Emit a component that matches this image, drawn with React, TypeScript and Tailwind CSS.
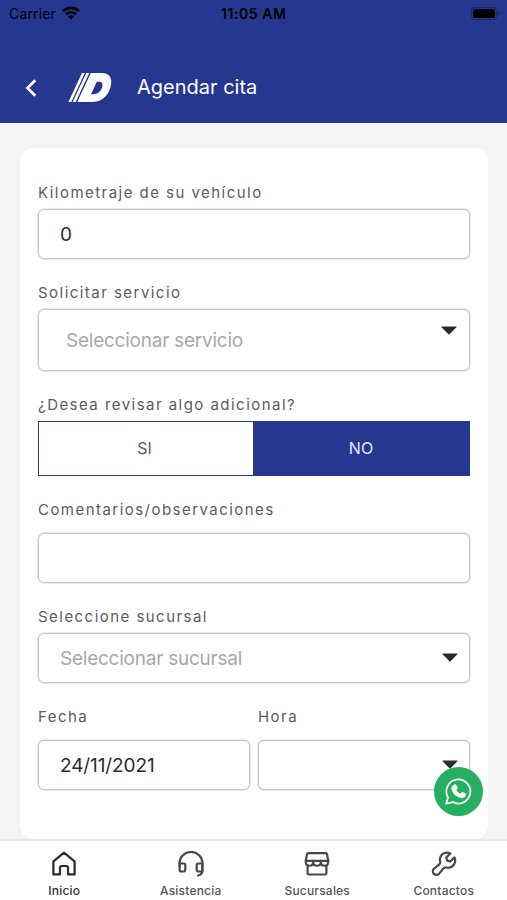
import React from 'react';

const labelClass = "block h-5 text-[15px] leading-5 tracking-[1.46px] text-[#5c5c5c] whitespace-nowrap";
const boxClass = "flex items-center rounded-md border border-[#c6c6c6] shadow-[0_0_0_0.5px_#d4d4d4] bg-white";

function Caret({ className = "" }: { className?: string }) {
  return (
    <svg width="16" height="9" viewBox="0 0 16 9" className={className}>
      <path d="M1 .5h14a.5.5 0 0 1 .4.8L8.6 8.2a.9.9 0 0 1-1.2 0L.6 1.3A.5.5 0 0 1 1 .5Z" fill="#2b2b2b" />
    </svg>
  );
}

function StatusBar() {
  return (
    <div className="relative flex h-7 items-center justify-between pl-[9px] pr-[7px] text-black">
      <div className="flex items-center gap-[6px]">
        <span className="text-[14px] leading-7 tracking-[0.15px]">Carrier</span>
        <svg width="18" height="14" viewBox="0 0 18 14" fill="none" stroke="#000" strokeWidth="2.6" className="-mt-[2px]">
          <path d="M1 5.1a11.6 11.6 0 0 1 16 0" />
          <path d="M4 8.2a7.3 7.3 0 0 1 10 0" />
          <path d="M9 13.6 6 10.6a4.3 4.3 0 0 1 6 0Z" fill="#000" stroke="none" />
        </svg>
      </div>
      <span className="absolute left-[221px] text-[14px] leading-7 font-semibold tracking-[0.55px] whitespace-nowrap">11:05 AM</span>
      <svg width="29" height="13" viewBox="0 0 29 13" className="-mt-[2px]">
        <rect x="0.5" y="0.5" width="25" height="12" rx="3" fill="none" stroke="#000" strokeOpacity="0.25" />
        <rect x="2" y="2" width="22" height="9" rx="1.5" fill="#000" />
        <path d="M27 4.5v4q1.5-.6 1.5-2t-1.5-2Z" fill="#000" fillOpacity="0.35" />
      </svg>
    </div>
  );
}

function Header() {
  return (
    <header className="h-[123px] shrink-0 bg-[#25378f]">
      <StatusBar />
      <div className="flex h-[95px] items-start pt-[44px]">
        <svg width="12" height="18" viewBox="0 0 12 18" className="ml-[25px] mt-[7px]" fill="none" stroke="#fff" strokeWidth="2.6">
          <path d="M10.3 1.2 2.4 9l7.9 7.8" />
        </svg>
        <svg width="44" height="30" viewBox="0 0 44 30" className="ml-[31px]" fill="#fff">
          <path d="M14 1h2.8L3.3 30H.4Z" />
          <path d="M18.2 1h3L7.7 30h-3Z" />
          <path fillRule="evenodd" d="M22.800 1H34c6.600 0 10 4.200 9.200 10.500C42.200 21.500 35 30 25 30H9.300ZM28.800 9.800 23 22.200h2.700c4.600 0 8.100-4 8.700-8.500.3-2.500-.8-3.900-3.200-3.900Z" />
        </svg>
        <h1 className="ml-[25px] h-8 text-[20px] leading-[30px] text-white whitespace-nowrap">Agendar cita</h1>
      </div>
    </header>
  );
}

function AppointmentForm() {
  return (
    <div className="flex h-[691px] flex-col rounded-[14px] bg-white px-[18px] pt-[35px]">
      <label className={labelClass}>Kilometraje de su vehículo</label>
      <div className={`${boxClass} mt-[6px] h-[50px] pl-[21px] text-[19px] text-[#2b2b2b]`}>
        <span className="pt-[2px]">0</span>
      </div>

      <label className={`${labelClass} mt-6`}>Solicitar servicio</label>
      <div className={`${boxClass} mt-[6px] h-[62px] justify-between pl-[27px] pr-[12px] text-[19px] tracking-[-0.24px] text-[#a8a8a8]`}>
        <span className="pt-[2px]">Seleccionar servicio</span>
        <Caret className="-mt-[19px]" />
      </div>

      <label className={`${labelClass} mt-6`}>¿Desea revisar algo adicional?</label>
      <div className="mt-[6px] grid h-[55px] grid-cols-2 border border-[#25378f] text-center text-[16px] leading-[53px]">
        <div className="-ml-[4px] text-[#5c5c5c]">SI</div>
        <div className="-ml-px bg-[#25378f] text-[#e4e8fa]">NO</div>
      </div>

      <label className={`${labelClass} mt-6`}>Comentarios/observaciones</label>
      <div className={`${boxClass} mt-[13px] h-[50px]`} />

      <label className={`${labelClass} mt-6`}>Seleccione sucursal</label>
      <div className={`${boxClass} mt-[6px] h-[50px] justify-between pl-[21px] pr-[11px] text-[19px] tracking-[-0.24px] text-[#a8a8a8]`}>
        <span className="pt-[2px]">Seleccionar sucursal</span>
        <Caret className="-mt-[2px]" />
      </div>

      <div className="mt-6 grid grid-cols-2 gap-2">
        <div>
          <label className={labelClass}>Fecha</label>
          <div className={`${boxClass} mt-[13px] h-[50px] pl-[21px] text-[19px] tracking-[-0.1px] text-[#2b2b2b]`}>
            <span className="pt-[2px]">24/11/2021</span>
          </div>
        </div>
        <div>
          <label className={labelClass}>Hora</label>
          <div className={`${boxClass} mt-[13px] h-[50px] justify-end pr-[11px]`}>
            <Caret className="-mt-[2px]" />
          </div>
        </div>
      </div>
    </div>
  );
}

function WhatsAppButton() {
  return (
    <button className="absolute left-[433.500px] top-[766.500px] flex h-[49px] w-[49px] items-center justify-center rounded-full bg-[#27ae60]">
      <svg width="27" height="27" viewBox="0 0 27 27" fill="none">
        <path d="M1.200 25.800 3 19.500A12 12 0 1 1 7.800 24.100Z" stroke="#fff" strokeWidth="1.700" strokeLinejoin="round" />
        <path d="M8.900 6.800c1-.8 2-.7 2.500.3l1.200 2.700c.3.800-.9 1.700-1.100 2.300.8 1.700 2.200 3 4 3.600.8-.7 1.400-1.900 2.200-1.600l2.800 1.400c.8.400.6 1.900 0 2.700-1 1.500-3.400 2.100-5.400 1.500-4.200-1.200-6.900-3.800-8.300-7.500-.8-2.100-.2-4.200 2.100-5.400Z" fill="#fff" />
      </svg>
    </button>
  );
}

const iconProps = {
  width: 26,
  height: 26,
  viewBox: "0 0 26 26",
  fill: "none",
  strokeWidth: 2.2,
  strokeLinejoin: "round" as const,
  strokeLinecap: "round" as const,
};

const tabs = [
  {
    label: "Inicio",
    active: true,
    icon: (
      <svg {...iconProps} stroke="#2b2b2b">
        <path d="M2.400 10.400 13 1.700l10.600 8.700v13H17v-6.600a1.800 1.800 0 0 0-1.800-1.800h-4.400A1.800 1.800 0 0 0 9 16.800v6.600H2.400Z" />
      </svg>
    ),
  },
  {
    label: "Asistencia",
    active: false,
    icon: (
      <svg {...iconProps} stroke="#484848">
        <path d="M1.600 15.500V12a11.400 11 0 0 1 22.800 0v7c0 3-1.400 5-4.300 5.500" />
        <path d="M1.600 12.500h4.200a1.500 1.500 0 0 1 1.500 1.500v4.500a2 2 0 0 1-2 2H3.100a1.500 1.500 0 0 1-1.500-1.500Z" />
        <path d="M24.400 12.500h-4.200a1.500 1.500 0 0 0-1.500 1.500v4.500a2 2 0 0 0 2 2h3.700Z" />
      </svg>
    ),
  },
  {
    label: "Sucursales",
    active: false,
    icon: (
      <svg {...iconProps} stroke="#484848">
        <path d="M4.400 2.100h17.200a1.500 1.500 0 0 1 1.400 1.100l1.200 6.600H1.800L3 3.200a1.500 1.500 0 0 1 1.400-1.100Z" />
        <path d="M1.800 9.800v1.400c0 4.700 7.400 4.700 7.400 0 0 4.700 7.600 4.700 7.600 0 0 4.700 7.400 4.700 7.400 0V9.800M9.200 9.800v1.400M16.800 9.800v1.400" />
        <path d="M3.600 14.800v7.400c0 .8.500 1.300 1.300 1.300h16.200c.8 0 1.300-.5 1.300-1.300v-7.400" />
      </svg>
    ),
  },
  {
    label: "Contactos",
    active: false,
    icon: (
      <svg {...iconProps} stroke="#484848">
        <path d="M19.400 2.400C13.500-.2 7.600 4.200 9.200 10.700c.3 1.300-.1 2-1.200 2.900l-5.100 4.300a3.500 3.500 0 1 0 5 5l4.300-5.200c1-1.200 1.700-1.500 3-1.200 6.500 1.400 10.600-4.700 8.300-10.100l-4.200 4.100-3.100-.9-.9-3Z" />
      </svg>
    ),
  },
];

function TabBar() {
  return (
    <nav className="grid h-[61px] shrink-0 grid-cols-4 border-t-2 border-[#e9e9e9] bg-white pl-px">
      {tabs.map((tab) => (
        <div key={tab.label} className="flex flex-col items-center pt-[10px]">
          {tab.icon}
          <span className={`mt-[5px] text-[12px] leading-[18px] font-medium tracking-[0.2px] ${tab.active ? "text-[#333333]" : "text-[#555555]"}`}>
            {tab.label}
          </span>
        </div>
      ))}
    </nav>
  );
}

export default function App() {
  return (
    <div className="relative flex h-[900px] w-[507px] flex-col overflow-hidden bg-[#f4f4f4] font-['Inter',sans-serif]">
      <Header />
      <main className="h-[716px] shrink-0 pl-5 pr-[19px] pt-[25px]">
        <AppointmentForm />
      </main>
      <TabBar />
      <WhatsAppButton />
    </div>
  );
}
